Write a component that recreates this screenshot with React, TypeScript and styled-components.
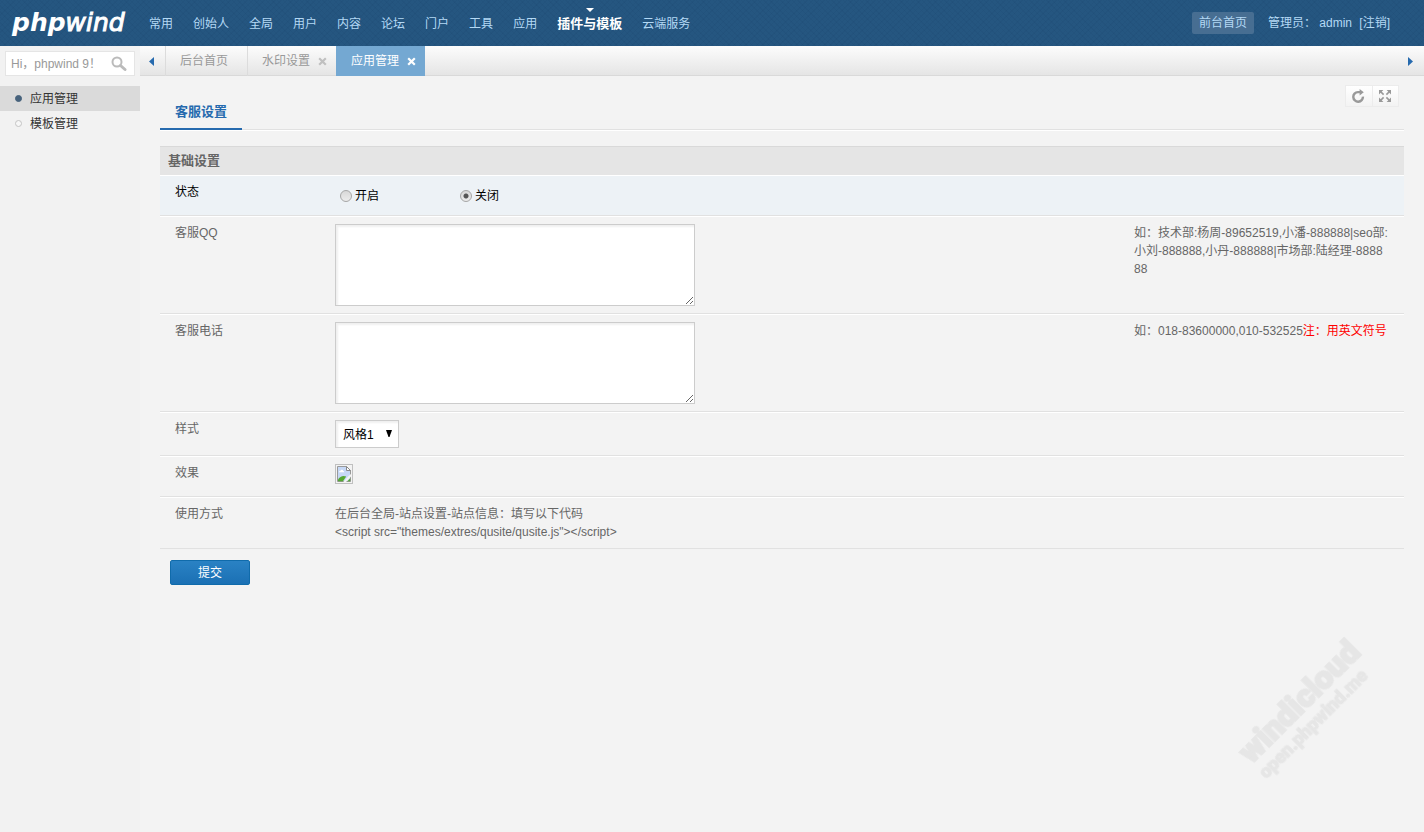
import React, { useState } from "react";
import styled, { createGlobalStyle, css } from "styled-components";

const GlobalStyle = createGlobalStyle`
  *, *::before { box-sizing: border-box; }
  body {
    margin: 0;
    background: #f3f3f3;
    color: #666;
    font: 12px/18px "Liberation Sans", Arial, "Noto Sans CJK SC", sans-serif;
  }
  button, input, select, textarea { font: inherit; margin: 0; }
  a { color: inherit; text-decoration: none; }
  ul { list-style: none; margin: 0; padding: 0; }
`;

const Page = styled.div`
  display: flex;
  flex-direction: column;
  min-height: 100vh;
`;

const Header = styled.header`
  display: flex;
  align-items: center;
  height: 46px;
  padding-right: 34px;
  color: #b4d9f5;
  background:
    repeating-linear-gradient(45deg, rgba(10, 40, 80, 0.06) 0 1px, transparent 1px 4px),
    repeating-linear-gradient(-45deg, rgba(10, 40, 80, 0.06) 0 1px, transparent 1px 4px),
    #255680;
`;

const Logo = styled.a`
  width: 139px;
  padding-left: 12px;
  color: #fff;
  font: italic 400 25px/44px "DejaVu Sans", sans-serif;

  b { font-weight: 700; }
  span { -webkit-text-stroke: 1px #fff; }
`;

const MainNav = styled.nav`
  flex: 1;
  padding-top: 2px;

  ul { display: flex; }
`;

const NavLink = styled.a<{ $active?: boolean }>`
  position: relative;
  display: block;
  padding: 0 10px;
  line-height: 44px;
  ${(p) =>
    p.$active &&
    css`
      color: #fff;
      font-size: 13px;
      font-weight: 700;

      &::before {
        content: "";
        position: absolute;
        top: 6px;
        left: 50%;
        margin-left: -4px;
        border: 4px solid transparent;
        border-top-color: #fff;
        border-bottom: 0;
      }
    `}
`;

const Account = styled.div`
  display: flex;
  align-items: center;
  gap: 4px;
  white-space: pre;
`;

const SiteLink = styled.a`
  margin-right: 10px;
  padding: 2px 7px;
  border-radius: 2px;
  background: #476e92;
`;

const Body = styled.div`
  display: flex;
  flex: 1;
`;

const Sidebar = styled.aside`
  width: 140px;
  background: #f2f2f2;
`;

const SearchForm = styled.form`
  display: flex;
  align-items: center;
  height: 25px;
  margin: 5px 5px 10px;
  border: 1px solid #e5e5e5;
  background: #fff;
`;

const SearchInput = styled.input`
  flex: 1;
  min-width: 0;
  padding: 0 0 0 5px;
  border: 0;
  background: none;
  outline: 0;

  &::placeholder { color: #999; opacity: 1; }
`;

const PlainButton = styled.button`
  display: flex;
  align-items: center;
  justify-content: center;
  padding: 0;
  border: 0;
  background: none;
  color: inherit;
  cursor: pointer;
`;

const SearchButton = styled(PlainButton)`
  width: 30px;
  height: 22px;
`;

const SideLink = styled.a<{ $active?: boolean }>`
  display: flex;
  align-items: center;
  gap: 8px;
  height: 25px;
  padding-left: 15px;
  color: #333;
  background: ${(p) => (p.$active ? "#dadada" : "none")};

  &::before {
    content: "";
    width: 7px;
    height: 7px;
    border: 1px solid ${(p) => (p.$active ? "#47627c" : "#c4c4c4")};
    border-radius: 50%;
    background: ${(p) => (p.$active ? "#47627c" : "#f7f7f7")};
  }
`;

const Workspace = styled.div`
  flex: 1;
  min-width: 0;
`;

const TabBar = styled.div`
  display: flex;
  height: 30px;
  border-bottom: 1px solid #d9d9d9;
  background: linear-gradient(#fcfcfc, #e5e5e5);
`;

const ScrollButton = styled(PlainButton)`
  width: 25px;
  height: 30px;
  padding-right: 3px;
`;

const TabList = styled.ul`
  display: flex;
  flex: 1;
`;

const Tab = styled.li<{ $active?: boolean }>`
  display: flex;
  align-items: center;
  gap: 8px;
  height: 30px;
  padding: 0 9px 0 15px;
  color: ${(p) => (p.$active ? "#fff" : "#999")};
  background: ${(p) => (p.$active ? "#74a8d2" : "none")};
  box-shadow: ${(p) => (p.$active ? "none" : "inset 1px 0 #dcdcdc")};

  &:first-child { padding-right: 19px; }
`;

const CloseButton = styled(PlainButton)<{ $active?: boolean }>`
  width: 9px;
  height: 9px;
  color: ${(p) => (p.$active ? "#fff" : "#c0c0c0")};
`;

const Content = styled.main`
  position: relative;
  padding: 10px 20px;
`;

const Tools = styled.div`
  position: absolute;
  top: 9px;
  right: 25px;
  display: flex;
  border: 1px solid #ececec;
  background: linear-gradient(#fff, #f3f3f3);
`;

const ToolButton = styled(PlainButton)`
  width: 26px;
  height: 20px;
  padding-right: 2px;
  color: #999;

  & + & { border-left: 1px solid #ececec; }
`;

const SectionNav = styled.nav`
  display: flex;
  height: 44px;
  margin-bottom: 16px;
  border-bottom: 1px solid #e1e1e1;
  box-shadow: 0 1px #fff;
`;

const SectionLink = styled.a`
  height: 44px;
  padding: 8px 15px 0;
  border-bottom: 2px solid #266aae;
  color: #266aae;
  font-size: 13px;
  font-weight: 700;
  line-height: 36px;
`;

const BlockTitle = styled.h2`
  height: 29px;
  margin: 0;
  padding: 0 8px;
  border-top: 1px solid #d9d9d9;
  background: #e5e5e5;
  font-size: 13px;
  line-height: 28px;
`;

const Row = styled.div<{ $highlight?: boolean }>`
  display: grid;
  grid-template-columns: 160px minmax(0, 1fr) 260px;
  padding: 7px 10px 7px 15px;
  border-top: 1px solid #fff;
  border-bottom: 1px solid #e1e1e1;
  background: ${(p) => (p.$highlight ? "#edf2f6" : "none")};
  color: ${(p) => (p.$highlight ? "#000" : "inherit")};
`;

const Options = styled.div`
  display: flex;
  height: 25px;
`;

const Option = styled.label`
  display: flex;
  align-items: center;
  gap: 3px;
  width: 120px;
  padding-left: 5px;
`;

const Radio = styled.input`
  appearance: none;
  width: 12px;
  height: 12px;
  border: 1px solid #a6a6a6;
  border-radius: 50%;
  background: linear-gradient(#d8d8d8, #ececec);

  &:checked {
    background:
      radial-gradient(circle, #555 0 2px, transparent 3px),
      linear-gradient(#d8d8d8, #ececec);
  }
`;

const TextArea = styled.textarea`
  display: block;
  width: 360px;
  max-width: 100%;
  height: 82px;
  padding: 4px;
  border: 1px solid #ccc;
  background: #fff;
  box-shadow: inset 2px 2px 2px #f0f0f0;
  outline: 0;
`;

const SelectBox = styled.span`
  position: relative;
  justify-self: start;
  height: 28px;

  svg {
    position: absolute;
    top: 10px;
    right: 7px;
    pointer-events: none;
  }
`;

const Select = styled.select`
  appearance: none;
  width: 64px;
  height: 28px;
  padding: 2px 7px 0;
  border: 1px solid #ccc;
  border-radius: 0;
  background: #fff;
  box-shadow: inset 2px 2px 2px #f0f0f0;
  color: #000;
`;

const Preview = styled.div`
  height: 25px;

  svg { display: block; }
`;

const Hint = styled.div`
  white-space: nowrap;

  em { color: #f00; font-style: normal; }
`;

const SubmitButton = styled.button`
  display: block;
  width: 80px;
  height: 25px;
  margin: 11px 10px;
  padding: 0;
  border: 1px solid #106bab;
  border-radius: 2px;
  background: linear-gradient(#2a82c4, #1b70b4);
  color: #fff;
  cursor: pointer;
`;

const Watermark = styled.div`
  position: fixed;
  right: 36px;
  bottom: 98px;
  width: 160px;
  color: #e6e6e6;
  font-family: Roboto, "Liberation Sans", sans-serif;
  font-weight: 900;
  white-space: nowrap;
  transform: rotate(-45deg);
  pointer-events: none;
`;

const WatermarkName = styled.div`
  font-size: 32px;
  line-height: 30px;
  -webkit-text-stroke: 2px #e6e6e6;
`;

const WatermarkSite = styled.div`
  font-size: 18px;
  line-height: 22px;
  -webkit-text-stroke: 1px #e6e6e6;
`;

const SearchIcon = () => (
  <svg width="16" height="16" viewBox="0 0 16 16" fill="none" stroke="#bbb">
    <circle cx="6" cy="6" r="4.5" strokeWidth="2" />
    <path d="M9.5 9.5 14 13.5" strokeWidth="3" strokeLinecap="round" />
  </svg>
);

const CloseIcon = () => (
  <svg width="9" height="9" viewBox="0 0 9 9" stroke="currentColor" strokeWidth="2.2">
    <path d="M1.2 1.2 7.8 7.8M7.8 1.2 1.2 7.8" />
  </svg>
);

const Triangle = ({ points }: { points: string }) => (
  <svg width="5" height="9" viewBox="0 0 5 9" fill="#266aae">
    <polygon points={points} />
  </svg>
);

const RefreshIcon = () => (
  <svg width="14" height="14" viewBox="0 0 14 14">
    <path d="M9 3.1H6.9A4.8 4.8 0 1 0 11.9 7.6" fill="none" stroke="currentColor" strokeWidth="2.4" />
    <path d="M8.6 0 12.8 3.2 8.6 6.4Z" fill="currentColor" />
  </svg>
);

const ExpandIcon = () => (
  <svg width="12" height="12" viewBox="0 0 12 12" fill="currentColor" stroke="currentColor">
    <path stroke="none" d="M0 0H4.4L0 4.4ZM12 0V4.4L7.6 0ZM0 12V7.6L4.4 12ZM12 12H7.6L12 7.6Z" />
    <path strokeWidth="1.6" d="M1 1 4.6 4.6M11 1 7.4 4.6M1 11 4.6 7.4M11 11 7.4 7.4" />
  </svg>
);

const BrokenImage = () => (
  <svg width="18" height="20" viewBox="0 0 18 20" role="img" aria-label="效果">
    <rect x="0.5" y="0.5" width="17" height="19" fill="none" stroke="#c0c0c0" />
    <path d="M2.5 2.5H11.5L15.5 6.5V17.5H2.5Z" fill="#c6d8f6" stroke="#999" />
    <path d="M11.5 2.5V6.5H15.5Z" fill="#fff" stroke="#888" />
    <path d="M4 8.2c0-1 .8-1.4 1.4-1.3.4-1.6 2.6-1.4 2.8 0 .8 0 1 .7 1 1.3Z" fill="#fff" />
    <path d="M3 17.2V15.6C4.8 12.4 8.4 11 11.2 12.6L8 17.2Z" fill="#55a832" />
    <path d="M16.5 9.5V12L10.6 18.4H7.8L13.4 12.2Z" fill="#f3f3f3" />
    <path d="M12.4 17.2 15.2 14.2V17.2Z" fill="#55a832" />
  </svg>
);

const navItems = ["常用", "创始人", "全局", "用户", "内容", "论坛", "门户", "工具", "应用", "插件与模板", "云端服务"];
const sideItems = ["应用管理", "模板管理"];
const tabs = [
  { label: "后台首页", closable: false },
  { label: "水印设置", closable: true },
  { label: "应用管理", closable: true },
];

export default function App() {
  const [status, setStatus] = useState("关闭");

  return (
    <Page>
      <GlobalStyle />
      <Header>
        <Logo href="#"><b>php</b><span>wind</span></Logo>
        <MainNav>
          <ul>
            {navItems.map((item) => (
              <li key={item}>
                <NavLink href="#" $active={item === "插件与模板"}>{item}</NavLink>
              </li>
            ))}
          </ul>
        </MainNav>
        <Account>
          <SiteLink href="#">前台首页</SiteLink>
          <span>管理员： admin </span>
          <a href="#">[注销]</a>
        </Account>
      </Header>

      <Body>
        <Sidebar>
          <SearchForm onSubmit={(e) => e.preventDefault()}>
            <SearchInput aria-label="搜索" placeholder="Hi，phpwind 9！" />
            <SearchButton aria-label="搜索"><SearchIcon /></SearchButton>
          </SearchForm>
          <ul>
            {sideItems.map((item) => (
              <li key={item}>
                <SideLink href="#" $active={item === "应用管理"}>{item}</SideLink>
              </li>
            ))}
          </ul>
        </Sidebar>

        <Workspace>
          <TabBar>
            <ScrollButton aria-label="向左"><Triangle points="5,0 5,9 0,4.5" /></ScrollButton>
            <TabList>
              {tabs.map(({ label, closable }) => {
                const active = label === "应用管理";
                return (
                  <Tab key={label} $active={active}>
                    <a href="#">{label}</a>
                    {closable && (
                      <CloseButton aria-label="关闭标签" $active={active}><CloseIcon /></CloseButton>
                    )}
                  </Tab>
                );
              })}
            </TabList>
            <ScrollButton aria-label="向右"><Triangle points="0,0 5,4.5 0,9" /></ScrollButton>
          </TabBar>

          <Content>
            <Tools>
              <ToolButton aria-label="刷新"><RefreshIcon /></ToolButton>
              <ToolButton aria-label="全屏"><ExpandIcon /></ToolButton>
            </Tools>
            <SectionNav>
              <SectionLink href="#">客服设置</SectionLink>
            </SectionNav>

            <form onSubmit={(e) => e.preventDefault()}>
              <BlockTitle>基础设置</BlockTitle>
              <Row $highlight role="radiogroup" aria-labelledby="status">
                <span id="status">状态</span>
                <Options>
                  {["开启", "关闭"].map((value) => (
                    <Option key={value}>
                      <Radio
                        type="radio"
                        name="status"
                        checked={status === value}
                        onChange={() => setStatus(value)}
                      />
                      {value}
                    </Option>
                  ))}
                </Options>
              </Row>
              <Row>
                <label htmlFor="qq">客服QQ</label>
                <TextArea id="qq" />
                <Hint>
                  如：技术部:杨周-89652519,小潘-888888|seo部:<br />
                  小刘-888888,小丹-888888|市场部:陆经理-8888<br />
                  88
                </Hint>
              </Row>
              <Row>
                <label htmlFor="phone">客服电话</label>
                <TextArea id="phone" />
                <Hint>如：018-83600000,010-532525<em>注：用英文符号</em></Hint>
              </Row>
              <Row>
                <label htmlFor="theme">样式</label>
                <SelectBox>
                  <Select id="theme"><option>风格1</option></Select>
                  <svg width="6" height="7" viewBox="0 0 6 7"><path d="M0 0H6L3.5 7H2.5Z" /></svg>
                </SelectBox>
              </Row>
              <Row>
                <span>效果</span>
                <Preview><BrokenImage /></Preview>
              </Row>
              <Row>
                <span>使用方式</span>
                <div>
                  在后台全局-站点设置-站点信息：填写以下代码<br />
                  {'<script src="themes/extres/qusite/qusite.js"></script>'}
                </div>
              </Row>
              <SubmitButton type="submit">提交</SubmitButton>
            </form>
          </Content>
        </Workspace>
      </Body>

      <Watermark aria-hidden="true">
        <WatermarkName>windicloud</WatermarkName>
        <WatermarkSite>open.phpwind.me</WatermarkSite>
      </Watermark>
    </Page>
  );
}
